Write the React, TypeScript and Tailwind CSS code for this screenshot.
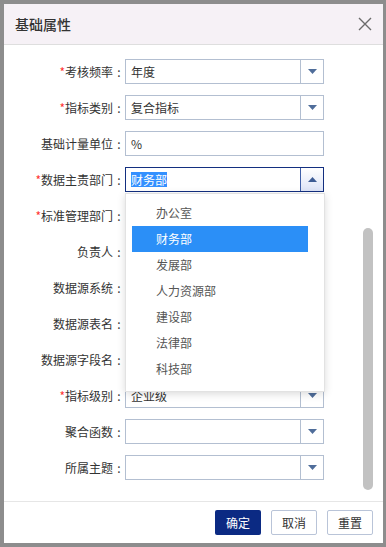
import React from "react";

type Row = {
  label: string;
  required?: boolean;
  kind: "select" | "text";
  value?: string;
  focused?: boolean;
};

const rows: Row[] = [
  { label: "考核频率", required: true, kind: "select", value: "年度" },
  { label: "指标类别", required: true, kind: "select", value: "复合指标" },
  { label: "基础计量单位", kind: "text", value: "%" },
  { label: "数据主责部门", required: true, kind: "select", value: "财务部", focused: true },
  { label: "标准管理部门", required: true, kind: "select" },
  { label: "负责人", kind: "text" },
  { label: "数据源系统", kind: "text" },
  { label: "数据源表名", kind: "text" },
  { label: "数据源字段名", kind: "text" },
  { label: "指标级别", required: true, kind: "select", value: "企业级" },
  { label: "聚合函数", kind: "select" },
  { label: "所属主题", kind: "select" },
];

const options = ["办公室", "财务部", "发展部", "人力资源部", "建设部", "法律部", "科技部"];

function Arrow({ up }: { up?: boolean }) {
  return (
    <svg width="9" height="5" viewBox="0 0 9 5" className="block">
      {up ? (
        <path d="M0 5 L4.5 0 L9 5 Z" fill="#3d5c94" />
      ) : (
        <path d="M0 0 L9 0 L4.5 5 Z" fill="#4f6d9a" />
      )}
    </svg>
  );
}

function Field({ row }: { row: Row }) {
  if (row.kind === "text") {
    return (
      <div className="flex h-[25px] w-[199px] items-center border border-[#b3bfd1] bg-white px-[5px] text-[12px] text-[#333]">
        {row.value}
      </div>
    );
  }
  return (
    <div
      className={
        "flex h-[25px] w-[199px] border bg-white " +
        (row.focused ? "border-[#132f80]" : "border-[#b3bfd1]")
      }
    >
      <div className="flex flex-1 items-center px-[5px] text-[12px] text-[#333]">
        {row.focused ? (
          <span className="bg-[#3390ff] text-white leading-[15px]">{row.value}</span>
        ) : (
          row.value
        )}
      </div>
      <div
        className={
          "flex w-[23px] items-center justify-center border-l " +
          (row.focused
            ? "border-[#3f5fa8] bg-[linear-gradient(#ffffff,#dde4f7)]"
            : "border-[#b3bfd1] bg-white")
        }
      >
        <Arrow up={row.focused} />
      </div>
    </div>
  );
}

export default function App() {
  return (
    <div className="h-[547px] w-[386px] overflow-hidden bg-[#8d8d8d] pl-[4px] pt-[4px] [font-family:'Noto_Sans_CJK_SC',sans-serif]">
      <div className="flex h-[539px] w-[379px] flex-col bg-white">
        {/* header */}
        <div className="flex h-[41px] shrink-0 items-center justify-between border-b border-[#dedede] bg-[#f6f1f6] pl-[11px] pr-[11px]">
          <span className="text-[14px] font-medium text-[#333]">基础属性</span>
          <svg width="14" height="14" viewBox="0 0 14 14">
            <path d="M1 1 L13 13 M13 1 L1 13" stroke="#6b6b6b" strokeWidth="1.4" />
          </svg>
        </div>

        {/* body */}
        <div className="relative flex flex-1 overflow-hidden">
          <div className="flex flex-1 flex-col gap-[11px] pt-[14px]">
            {rows.map((r) => (
              <div key={r.label} className="flex items-center">
                <div className="flex w-[121px] shrink-0 items-center justify-end text-[12px] text-[#333]">
                  <span>
                    {r.required && <span className="text-[#f33]">*</span>}
                    {r.label}
                  </span>
                  <span className="w-[12px] text-center">:</span>
                </div>
                <Field row={r} />
              </div>
            ))}
          </div>
          {/* scrollbar */}
          <div className="mr-[10px] w-[10px] shrink-0 pb-[11px] pt-[183px]">
            <div className="h-full w-[10px] rounded-full bg-[#c2c2c2]" />
          </div>

          {/* dropdown menu */}
          <div className="absolute left-[121px] top-[148px] h-[199px] w-[200px] border border-[#e2e2e2] bg-white pt-[6px] shadow-[0_2px_8px_rgba(0,0,0,0.15)]">
            {options.map((o) => (
              <div
                key={o}
                className={
                  "ml-[6px] mr-[16px] flex h-[26px] items-center pl-[24px] text-[12px] " +
                  (o === "财务部" ? "bg-[#2b8ff7] text-white" : "text-[#555]")
                }
              >
                {o}
              </div>
            ))}
          </div>
        </div>

        {/* footer */}
        <div className="flex h-[42px] shrink-0 items-center justify-end gap-[10px] border-t border-[#e6e6e6] pr-[10px]">
          <button className="h-[25px] w-[46px] rounded-[2px] bg-[#0b2a83] text-[12px] text-white">确定</button>
          <button className="h-[25px] w-[46px] rounded-[2px] border border-[#b9c4d8] bg-white text-[12px] text-[#333]">取消</button>
          <button className="h-[25px] w-[46px] rounded-[2px] border border-[#b9c4d8] bg-white text-[12px] text-[#333]">重置</button>
        </div>
      </div>
    </div>
  );
}
